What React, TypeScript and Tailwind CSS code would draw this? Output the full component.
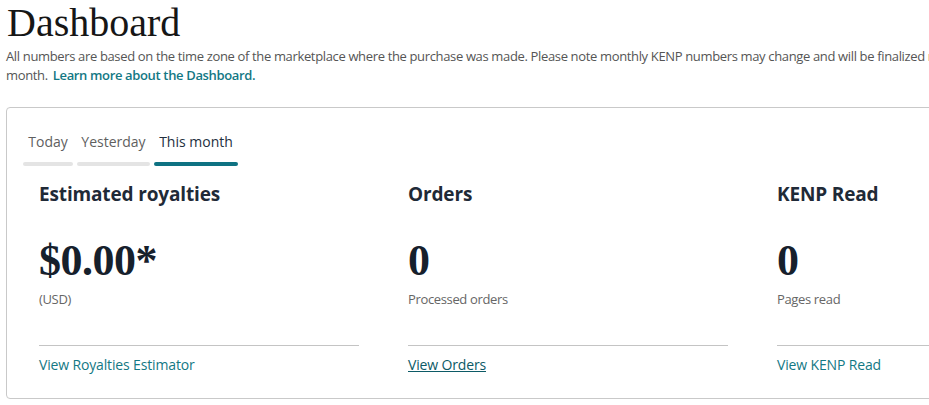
import React from 'react';

const tabs = [
  { label: 'Today', w: 'w-[50px]', active: false },
  { label: 'Yesterday', w: 'w-[73px]', active: false },
  { label: 'This month', w: 'w-[84px]', active: true },
];

const stats = [
  { title: 'Estimated royalties', value: '$0.00*', note: '(USD)', link: 'View Royalties Estimator', hover: false },
  { title: 'Orders', value: '0', note: 'Processed orders', link: 'View Orders', hover: true },
  { title: 'KENP Read', value: '0', note: 'Pages read', link: 'View KENP Read', hover: false },
];

const App: React.FC = () => {
  return (
    <div className="w-screen h-[405px] overflow-hidden bg-white">
      <div className="w-[1180px] pl-[6px] pr-[8px] font-['Open_Sans',sans-serif]">
        <h1 className="pl-[1px] text-[40px] leading-[46px] text-[#161616] font-['Liberation_Serif',serif] font-normal">
          Dashboard
        </h1>
        <p className="mt-[1px] text-[13px] leading-[19px] tracking-[-0.35px] text-[#555555] whitespace-nowrap">
          All numbers are based on the time zone of the marketplace where the purchase was made. Please note monthly KENP numbers may change and will be finalized near the middle of the following
          <br />
          month.{' '}
          <a href="#" className="ml-[2px] font-semibold text-[#137884]">Learn more about the Dashboard.</a>
        </p>

        <div className="mt-[22px] border border-[#c9c9c9] rounded-[4px] pl-[16px] pt-6 pb-[23px]">
          <div className="flex gap-[4px]">
            {tabs.map((t) => (
              <div key={t.label} className={`${t.w} flex flex-col items-center`}>
                <span className={`text-[14px] leading-[20px] whitespace-nowrap ${t.active ? 'text-[#232f3e]' : 'text-[#5f5f5f]'}`}>
                  {t.label}
                </span>
                <div className={`mt-[10px] h-[4px] w-full rounded-full ${t.active ? 'bg-[#0e7282]' : 'bg-[#e4e4e4]'}`} />
              </div>
            ))}
          </div>

          <div className="mt-[15px] pl-[16px] flex gap-[49px]">
            {stats.map((s) => (
              <div key={s.title} className="w-[320px]">
                <h2 className="text-[19px] leading-[26px] font-bold tracking-[-0.15px] text-[#1f2a37]">{s.title}</h2>
                <div className="mt-[29px] text-[44px] leading-[50px] font-bold tracking-[-0.5px] text-[#16202c] font-['Liberation_Serif',serif]">
                  {s.value}
                </div>
                <div className="mt-[4px] text-[13px] leading-[19px] tracking-[-0.35px] text-[#666666]">{s.note}</div>
                <div className="mt-[36px] h-px bg-[#c4c4c4]" />
                <a
                  href="#"
                  className={`block mt-[9px] text-[14px] leading-[20px] tracking-[-0.15px] ${s.hover ? 'text-[#0c5a66] underline' : 'text-[#137884]'}`}
                >
                  {s.link}
                </a>
              </div>
            ))}
          </div>
        </div>
      </div>
    </div>
  );
};

export default App;
